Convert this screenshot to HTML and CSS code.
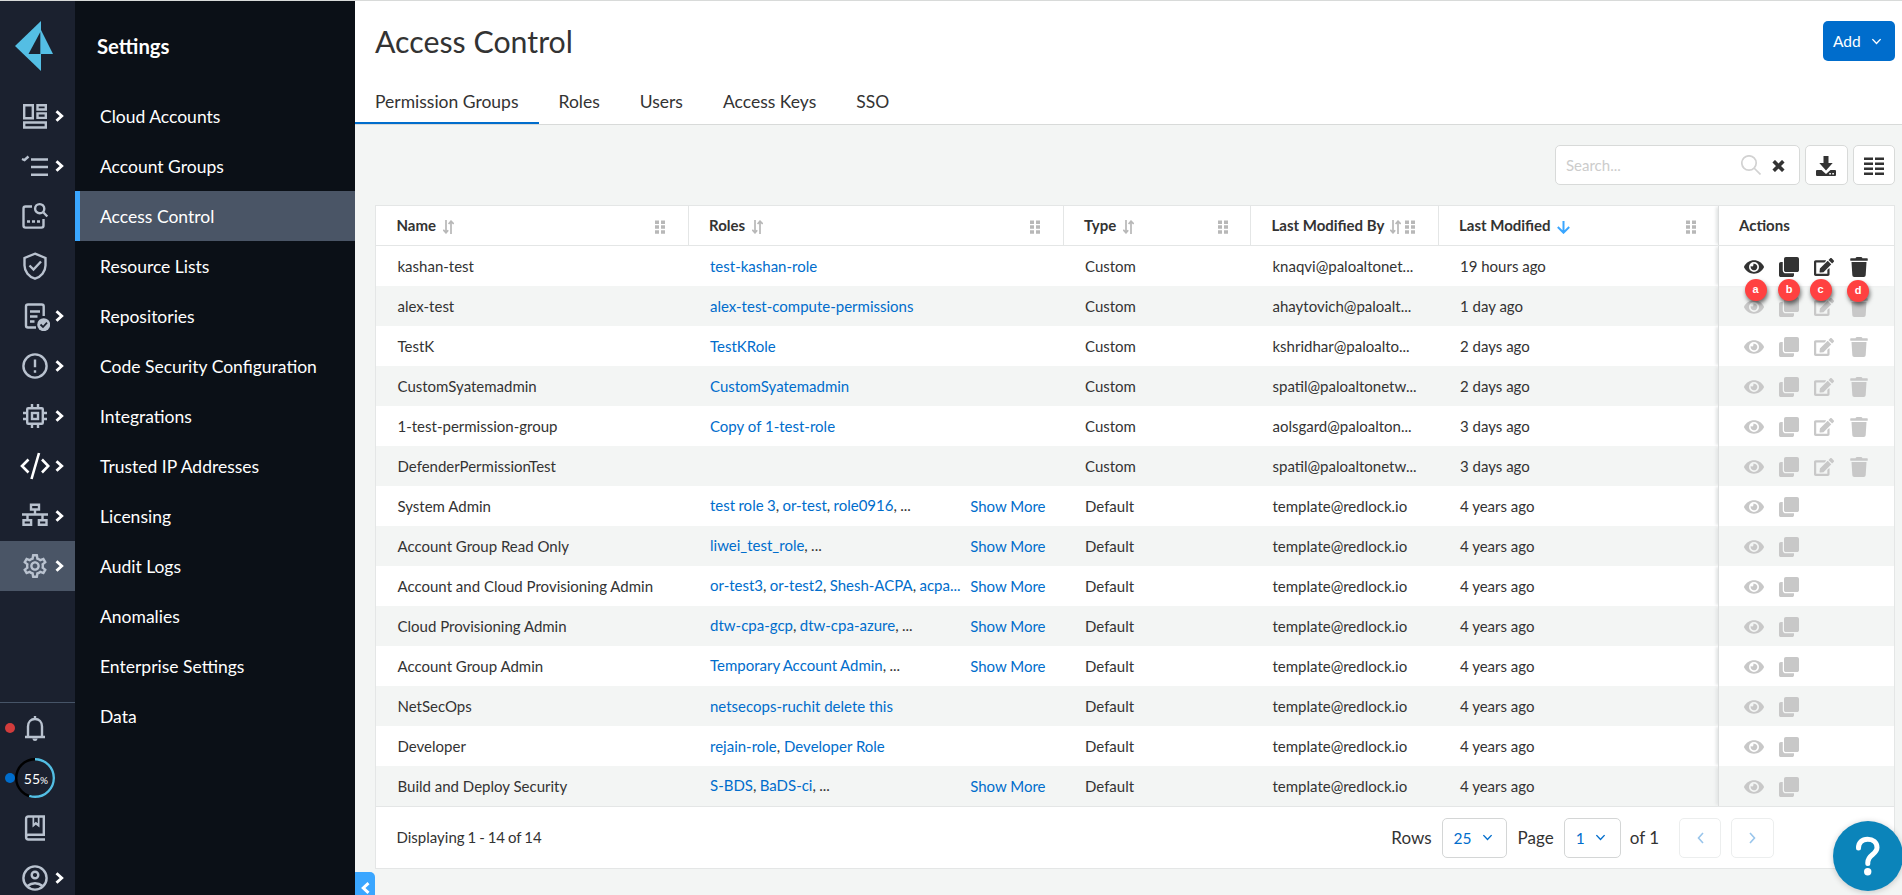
FILE: index.html
```html
<!DOCTYPE html>
<html lang="en">
<head>
<meta charset="utf-8">
<title>Access Control</title>
<link rel="stylesheet" href="styles.css">
</head>
<body>
<svg class="defs" width="0" height="0" aria-hidden="true">
  <symbol id="eye" viewBox="0 0 576 512"><path d="M572.52 241.4C518.29 135.59 410.93 64 288 64S57.68 135.64 3.48 241.41a32.35 32.35 0 0 0 0 29.19C57.71 376.41 165.07 448 288 448s230.32-71.64 284.52-177.41a32.35 32.35 0 0 0 0-29.19zM288 400a144 144 0 1 1 144-144 143.93 143.93 0 0 1-144 144zm0-240a95.31 95.31 0 0 0-25.31 3.79 47.85 47.85 0 0 1-66.9 66.9A95.78 95.78 0 1 0 288 160z"/></symbol>
  <symbol id="clone" viewBox="0 0 512 512"><path d="M464 0c26.51 0 48 21.49 48 48v288c0 26.51-21.49 48-48 48H176c-26.51 0-48-21.49-48-48V48c0-26.51 21.49-48 48-48h288M176 416c-44.112 0-80-35.888-80-80V128H48c-26.51 0-48 21.49-48 48v288c0 26.51 21.49 48 48 48h288c26.51 0 48-21.49 48-48v-48H176z"/></symbol>
  <symbol id="edit" viewBox="0 0 576 512"><path d="M402.6 83.2l90.2 90.2c3.8 3.8 3.8 10 0 13.8L274.4 405.6l-92.8 10.3c-12.4 1.4-22.9-9.1-21.5-21.5l10.3-92.8L388.8 83.2c3.8-3.8 10-3.8 13.8 0zm162-22.9l-48.8-48.8c-15.2-15.2-39.9-15.2-55.2 0l-35.4 35.4c-3.8 3.8-3.8 10 0 13.8l90.2 90.2c3.8 3.8 10 3.8 13.8 0l35.4-35.4c15.2-15.3 15.2-40 0-55.2zM384 346.2V448H64V128h229.8c3.2 0 6.2-1.3 8.5-3.5l40-40c7.6-7.6 2.2-20.5-8.5-20.5H48C21.5 64 0 85.5 0 112v352c0 26.5 21.5 48 48 48h352c26.5 0 48-21.5 48-48V306.2c0-10.7-12.9-16-20.5-8.5l-40 40c-2.2 2.3-3.5 5.3-3.5 8.5z"/></symbol>
  <symbol id="trash" viewBox="0 0 448 512"><path d="M432 32H312l-9.4-18.7A24 24 0 0 0 281.1 0H166.8a23.72 23.72 0 0 0-21.4 13.3L136 32H16A16 16 0 0 0 0 48v32a16 16 0 0 0 16 16h416a16 16 0 0 0 16-16V48a16 16 0 0 0-16-16zM53.2 467a48 48 0 0 0 47.9 45h245.8a48 48 0 0 0 47.9-45L416 128H32z"/></symbol>
  <symbol id="sort" viewBox="0 0 11 14"><path d="M3 0v12M.3 9.8 3 12.8l2.2-2.5M8 14V2M5.600 4 8 1.200 10.700 4" fill="none" stroke="currentColor" stroke-width="1.7"/></symbol>
  <symbol id="grip" viewBox="0 0 10 14"><path d="M0 .5h4v3.500H0zM6 .5h4v3.500H6zM0 5.300h4v3.500H0zM6 5.300h4v3.500H6zM0 10.200h4v3.500H0zM6 10.200h4v3.500H6z"/></symbol>
  <symbol id="chev" viewBox="0 0 9 12"><path d="M1.500 1.200 6.700 6 1.500 10.800" fill="none" stroke="currentColor" stroke-width="2.9"/></symbol>
  <symbol id="down" viewBox="0 0 12 8"><path d="M1.300 1.300 6 6.200l4.700-4.900" fill="none" stroke="currentColor" stroke-width="1.6"/></symbol>
</svg>

<div class="app">
  <nav class="rail">
    <svg class="logo" viewBox="0 0 38 50"><path d="M26 0v50L0 25z"/><path d="M26 9 38 33H26z"/><path class="hole" d="M25.300 11v22H13.500z"/></svg>
    <div class="rail-nav">
      <div class="rail-item"><svg class="ri" viewBox="-15 -15 30 30"><path d="M-10.800-10.800H-2.200V2.200h-8.600zM2.500-10.800h8.300v4.300H2.500zM2.500-2.600h8.300v4.500H2.500zM-10.800 6.500h21.600v5H-10.800z"/></svg><svg class="chev"><use href="#chev"/></svg></div>
      <div class="rail-item"><svg class="ri" viewBox="-15 -15 30 30"><path d="M-4-6.500h17M-4 1h17M-4 8.700h17M-13-7l2.500 1 4-3.500"/></svg><svg class="chev"><use href="#chev"/></svg></div>
      <div class="rail-item"><svg class="ri" viewBox="-15 -15 30 30"><path d="M-3-9.500h-6.500q-2 0-2 2V9.600q0 2 2 2H6.500q2 0 2-2V3M8.500-3.500l3.800 4"/><circle cx="4.700" cy="-7.300" r="4.600"/><path d="M-8 5.500h3M-3 5.500H0M2 5.500h3"/></svg></div>
      <div class="rail-item"><svg class="ri" viewBox="-15 -15 30 30"><path d="M0-12.300 10.500-8v7.500C10.500 5.500 6 10.800 0 12.700-6 10.800-10.500 5.500-10.500-.5V-8zM-5.500-.5l4 4L6-4.500"/></svg></div>
      <div class="rail-item"><svg class="ri" viewBox="-15 -15 30 30"><path d="M1 11.500h-8q-2 0-2-2V-9.500q0-2 2-2H6.700q2 0 2 2V0M-5-4.500H5M-5 .5H2.500M-5 5.500H-.5"/><circle class="solid" cx="8.700" cy="8.700" r="6.500"/><path class="cut" d="M5.500 8.500 8 11l4-4.300"/></svg><svg class="chev"><use href="#chev"/></svg></div>
      <div class="rail-item"><svg class="ri" viewBox="-15 -15 30 30"><circle r="11.600"/><path d="M0-6.500v7.800M0 4.200v2.600"/></svg><svg class="chev"><use href="#chev"/></svg></div>
      <div class="rail-item"><svg class="ri" viewBox="-15 -15 30 30"><rect x="-7.800" y="-7.800" width="15.600" height="15.600" rx="1"/><rect x="-3" y="-3" width="6" height="6"/><path d="M-3-8v-4M3-8v-4M-3 8v4M3 8v4M-8-3h-4M-8 3h-4M8-3h4M8 3h4"/></svg><svg class="chev"><use href="#chev"/></svg></div>
      <div class="rail-item"><svg class="ri code" viewBox="-15 -15 30 30"><path d="M-6.500-6.500-13 0l6.500 6.500M7-6.500 13.300 0 7 6.500M4-13-3.500 13"/></svg><svg class="chev"><use href="#chev"/></svg></div>
      <div class="rail-item"><svg class="ri" viewBox="-15 -15 30 30"><path d="M-4-11.300h8v4.800h-8zM0-6v5M-13-1.500h26M-7.500-1v5M7.500-1v5M-11.500 4.200h7.600v4.600h-7.600zM3.900 4.200h7.600v4.600H3.900z"/></svg><svg class="chev"><use href="#chev"/></svg></div>
      <div class="rail-item active"><svg class="ri gear" viewBox="-.5 -.5 25 25"><path d="M19.430 12.980c.04-.32.07-.64.07-.98 0-.34-.03-.66-.07-.98l2.110-1.650c.19-.15.24-.42.12-.64l-2-3.460c-.09-.16-.26-.25-.44-.25-.06 0-.12.010-.17.030l-2.490 1c-.52-.4-1.080-.73-1.690-.98l-.38-2.650C14.460 2.180 14.250 2 14 2h-4c-.25 0-.46.18-.49.42l-.38 2.650c-.61.25-1.170.59-1.690.98l-2.490-1c-.06-.02-.12-.03-.18-.03-.17 0-.34.09-.43.25l-2 3.460c-.13.22-.07.49.12.64l2.110 1.650c-.04.32-.07.65-.07.98 0 .33.03.66.07.98l-2.110 1.650c-.19.15-.24.42-.12.64l2 3.460c.09.16.26.25.44.25.06 0 .12-.01.17-.03l2.490-1c.52.4 1.080.73 1.690.98l.38 2.650c.03.24.24.42.49.42h4c.25 0 .46-.18.49-.42l.38-2.650c.61-.25 1.170-.59 1.690-.98l2.490 1c.06.02.12.03.18.03.17 0 .34-.09.43-.25l2-3.460c.12-.22.07-.49-.12-.64l-2.110-1.650zm-1.980-1.710c.04.31.05.52.05.73 0 .21-.02.43-.05.73l-.14 1.130.89.7 1.080.84-.7 1.210-1.270-.51-1.040-.42-.9.68c-.43.32-.84.56-1.250.73l-1.060.43-.16 1.130-.2 1.350h-1.400l-.19-1.350-.16-1.130-1.060-.43c-.43-.18-.83-.41-1.230-.71l-.91-.7-1.060.43-1.270.51-.7-1.210 1.080-.84.89-.7-.14-1.130c-.03-.31-.05-.54-.05-.74s.02-.43.05-.73l.14-1.130-.89-.7-1.080-.84.7-1.210 1.270.51 1.040.42.9-.68c.43-.32.84-.56 1.250-.73l1.060-.43.16-1.130.2-1.350h1.390l.19 1.350.16 1.130 1.060.43c.43.18.83.41 1.230.71l.91.7 1.060-.43 1.270-.51.7 1.210-1.070.85-.89.7.14 1.130zM12 8c-2.210 0-4 1.790-4 4s1.790 4 4 4 4-1.790 4-4-1.790-4-4-4zm0 6c-1.100 0-2-.9-2-2s.9-2 2-2 2 .9 2 2-.9 2-2 2z"/></svg><svg class="chev"><use href="#chev"/></svg></div>
    </div>
    <div class="rail-foot">
      <div class="rail-item"><span class="dot red"></span><svg class="ri" viewBox="-15 -15 30 30"><path d="M-10 9h20M-7 9V-1.500C-7-6-4-9 0-9s7 3 7 7.500V9M0-9v-3"/><path class="solid" d="M-2.700 10.500h5.400q-.5 2.500-2.700 2.500t-2.700-2.500z"/></svg></div>
      <div class="rail-item ring-item"><span class="dot blue"></span><svg class="ring" viewBox="-20 -20 40 40"><circle class="track" r="18.800"/><circle class="bar" r="18.800" pathLength="100" stroke-dasharray="55 45" transform="rotate(-90)"/></svg><span class="pct">55<small>%</small></span></div>
      <div class="rail-item"><svg class="ri" viewBox="-15 -15 30 30"><path d="M10 11.500H-6.700q-2.200 0-2.200-2.200V-9.300q0-2.200 2.200-2.200H8.800V6.700H-6.500q-2.400 0-2.400 2.400"/><path class="solid" d="M-2.500-11.500v11L.8-3.200 4.500-.5v-11H2.800v6.800L.8-6.200-.8-4.700v-6.800z"/></svg></div>
      <div class="rail-item"><svg class="ri" viewBox="-15 -15 30 30"><circle r="11.600"/><circle cy="-3" r="3.300"/><path d="M-8 8.300Q0 2 8 8.300"/></svg><svg class="chev"><use href="#chev"/></svg></div>
    </div>
  </nav>

  <aside class="side">
    <h2>Settings</h2>
    <ul>
      <li>Cloud Accounts</li><li>Account Groups</li><li class="active">Access Control</li><li>Resource Lists</li><li>Repositories</li><li>Code Security Configuration</li><li>Integrations</li><li>Trusted IP Addresses</li><li>Licensing</li><li>Audit Logs</li><li>Anomalies</li><li>Enterprise Settings</li><li>Data</li>
    </ul>
  </aside>

  <main class="main">
    <header class="head">
      <div class="title-row"><h1>Access Control</h1><button class="add"><span>Add</span><svg><use href="#down"/></svg></button></div>
      <div class="tabs"><span class="tab on">Permission Groups</span><span class="tab">Roles</span><span class="tab">Users</span><span class="tab">Access Keys</span><span class="tab">SSO</span></div>
    </header>
    <div class="tools">
      <div class="search"><span>Search...</span>
        <svg class="mag" viewBox="0 0 20 20"><circle cx="8" cy="8" r="7.200"/><path d="M13 13l6.500 6.500"/></svg>
        <svg class="x" viewBox="0 0 13 12"><path d="M1.700 1.200l9.600 9.600M11.300 1.200 1.700 10.800"/></svg>
      </div>
      <div class="tool dl"><svg viewBox="0 0 20 20"><path d="M7.500 0h5v7h4.200L10 14.500 3.300 7h4.200z"/><path d="M1 14h4.500L10 18l4.500-4H19q1 0 1 1v4q0 1-1 1H1q-1 0-1-1v-4q0-1 1-1z"/><path class="w" d="M13.300 17h1.600v1.500h-1.600zM16.300 17h1.600v1.500h-1.600z"/></svg></div>
      <div class="tool"><svg viewBox="0 0 20 20"><path d="M0 1.500h9v2.500H0zM11 1.500h9v2.500h-9zM0 6.500h9V9H0zM11 6.500h9V9h-9zM0 11.500h9V14H0zM11 11.500h9V14h-9zM0 16.500h9V19H0zM11 16.500h9V19h-9z"/></svg></div>
    </div>

    <section class="grid">
      <div class="row hrow">
        <div class="c"><b>Name</b><svg class="sort"><use href="#sort"/></svg><svg class="grip"><use href="#grip"/></svg></div>
        <div class="c"><b>Roles</b><svg class="sort"><use href="#sort"/></svg><svg class="grip"><use href="#grip"/></svg></div>
        <div class="c"><b>Type</b><svg class="sort"><use href="#sort"/></svg><svg class="grip"><use href="#grip"/></svg></div>
        <div class="c"><b>Last Modified By</b><svg class="sort tight"><use href="#sort"/></svg><svg class="grip"><use href="#grip"/></svg></div>
        <div class="c"><b>Last Modified</b><svg class="desc" viewBox="0 0 13 13"><path d="M6.500 0v11.500M.8 6l5.700 5.700L12.200 6"/></svg><svg class="grip"><use href="#grip"/></svg></div>
        <div class="c act"><b>Actions</b></div>
      </div>
      <div class="row first"><div class="c">kashan-test</div><div class="c"><a>test-kashan-role</a></div><div class="c">Custom</div><div class="c">knaqvi@paloaltonet...</div><div class="c">19 hours ago</div><div class="c act"><svg><use href="#eye"/></svg><svg><use href="#clone"/></svg><svg><use href="#edit"/></svg><svg><use href="#trash"/></svg><i class="mark a">a</i><i class="mark b">b</i><i class="mark m3">c</i><i class="mark d">d</i></div></div>
      <div class="row"><div class="c">alex-test</div><div class="c"><a>alex-test-compute-permissions</a></div><div class="c">Custom</div><div class="c">ahaytovich@paloalt...</div><div class="c">1 day ago</div><div class="c act"><svg><use href="#eye"/></svg><svg><use href="#clone"/></svg><svg><use href="#edit"/></svg><svg><use href="#trash"/></svg></div></div>
      <div class="row"><div class="c">TestK</div><div class="c"><a>TestKRole</a></div><div class="c">Custom</div><div class="c">kshridhar@paloalto...</div><div class="c">2 days ago</div><div class="c act"><svg><use href="#eye"/></svg><svg><use href="#clone"/></svg><svg><use href="#edit"/></svg><svg><use href="#trash"/></svg></div></div>
      <div class="row"><div class="c">CustomSyatemadmin</div><div class="c"><a>CustomSyatemadmin</a></div><div class="c">Custom</div><div class="c">spatil@paloaltonetw...</div><div class="c">2 days ago</div><div class="c act"><svg><use href="#eye"/></svg><svg><use href="#clone"/></svg><svg><use href="#edit"/></svg><svg><use href="#trash"/></svg></div></div>
      <div class="row"><div class="c">1-test-permission-group</div><div class="c"><a>Copy of 1-test-role</a></div><div class="c">Custom</div><div class="c">aolsgard@paloalton...</div><div class="c">3 days ago</div><div class="c act"><svg><use href="#eye"/></svg><svg><use href="#clone"/></svg><svg><use href="#edit"/></svg><svg><use href="#trash"/></svg></div></div>
      <div class="row"><div class="c">DefenderPermissionTest</div><div class="c"></div><div class="c">Custom</div><div class="c">spatil@paloaltonetw...</div><div class="c">3 days ago</div><div class="c act"><svg><use href="#eye"/></svg><svg><use href="#clone"/></svg><svg><use href="#edit"/></svg><svg><use href="#trash"/></svg></div></div>
      <div class="row"><div class="c">System Admin</div><div class="c multi"><span><a>test role 3</a>, <a>or-test</a>, <a>role0916</a>, ...</span><a class="more">Show More</a></div><div class="c">Default</div><div class="c">template@redlock.io</div><div class="c">4 years ago</div><div class="c act"><svg><use href="#eye"/></svg><svg><use href="#clone"/></svg></div></div>
      <div class="row"><div class="c">Account Group Read Only</div><div class="c multi"><span><a>liwei_test_role</a>, ...</span><a class="more">Show More</a></div><div class="c">Default</div><div class="c">template@redlock.io</div><div class="c">4 years ago</div><div class="c act"><svg><use href="#eye"/></svg><svg><use href="#clone"/></svg></div></div>
      <div class="row"><div class="c">Account and Cloud Provisioning Admin</div><div class="c multi"><span><a>or-test3</a>, <a>or-test2</a>, <a>Shesh-ACPA</a>, <a>acpa...</a></span><a class="more">Show More</a></div><div class="c">Default</div><div class="c">template@redlock.io</div><div class="c">4 years ago</div><div class="c act"><svg><use href="#eye"/></svg><svg><use href="#clone"/></svg></div></div>
      <div class="row"><div class="c">Cloud Provisioning Admin</div><div class="c multi"><span><a>dtw-cpa-gcp</a>, <a>dtw-cpa-azure</a>, ...</span><a class="more">Show More</a></div><div class="c">Default</div><div class="c">template@redlock.io</div><div class="c">4 years ago</div><div class="c act"><svg><use href="#eye"/></svg><svg><use href="#clone"/></svg></div></div>
      <div class="row"><div class="c">Account Group Admin</div><div class="c multi"><span><a>Temporary Account Admin</a>, ...</span><a class="more">Show More</a></div><div class="c">Default</div><div class="c">template@redlock.io</div><div class="c">4 years ago</div><div class="c act"><svg><use href="#eye"/></svg><svg><use href="#clone"/></svg></div></div>
      <div class="row"><div class="c">NetSecOps</div><div class="c"><a>netsecops-ruchit delete this</a></div><div class="c">Default</div><div class="c">template@redlock.io</div><div class="c">4 years ago</div><div class="c act"><svg><use href="#eye"/></svg><svg><use href="#clone"/></svg></div></div>
      <div class="row"><div class="c">Developer</div><div class="c"><span><a>rejain-role</a>, <a>Developer Role</a></span></div><div class="c">Default</div><div class="c">template@redlock.io</div><div class="c">4 years ago</div><div class="c act"><svg><use href="#eye"/></svg><svg><use href="#clone"/></svg></div></div>
      <div class="row"><div class="c">Build and Deploy Security</div><div class="c multi"><span><a>S-BDS</a>, <a>BaDS-ci</a>, ...</span><a class="more">Show More</a></div><div class="c">Default</div><div class="c">template@redlock.io</div><div class="c">4 years ago</div><div class="c act"><svg><use href="#eye"/></svg><svg><use href="#clone"/></svg></div></div>
      <footer class="foot">
        <span class="count">Displaying 1 - 14 of 14</span>
        <div class="pager">
          <span class="rows-l">Rows</span><div class="sel s1"><span>25</span><svg><use href="#down"/></svg></div>
          <span class="page-l">Page</span><div class="sel s2"><span>1</span><svg><use href="#down"/></svg></div>
          <span class="of">of 1</span>
          <div class="pg p1"><svg viewBox="0 0 7 12"><path d="M6 1 1.500 6 6 11"/></svg></div><div class="pg p2"><svg viewBox="0 0 7 12"><path d="M1 1l4.500 5L1 11"/></svg></div>
        </div>
      </footer>
    </section>
    <div class="collapse"><svg viewBox="0 0 9 12"><path d="M7.500 1.200 2.300 6l5.200 4.800"/></svg></div>
    <div class="help"><svg viewBox="0 0 26 40"><path d="M3.500 12C3.500 6.500 7 3.300 12.500 3.300S22 6.500 22 11.500c0 7-9.200 7-9.200 15v1"/><circle cx="12.700" cy="35.800" r="3.700"/></svg></div>
  </main>
</div>
</body>
</html>
```
FILE: styles.css
```css
* { box-sizing: border-box; }
body { margin: 0; font-family: Lato, "Open Sans", sans-serif; color: #333; overflow: hidden; }
svg { display: block; flex: none; fill: currentColor; }
.defs { position: absolute; }
.app { display: flex; height: 895px; border-top: 1px solid #d8dad9; overflow: hidden; }

/* icon rail */
.rail { width: 75px; flex: none; background: #1b212f; color: #b9c2cf; display: flex; flex-direction: column; height: 902px; }
.logo { width: 38px; height: 50px; margin: 20px 0 20px 15px; fill: #54bee4; }
.logo .hole { fill: #1b212f; }
.rail-nav { flex: 1; }
.rail-foot { border-top: 1px solid #465467; height: 201px; }
.rail-item { height: 50px; display: flex; align-items: center; padding-left: 20px; position: relative; }
.rail-item.active { background: #4a5566; }
.ri { width: 30px; height: 30px; fill: none; stroke: currentColor; stroke-width: 2.4; }
.ri.gear { fill: currentColor; stroke: none; }
.ri.code { color: #fff; stroke-width: 2.6; }
.ri .solid { fill: currentColor; stroke: none; }
.ri .cut { stroke: #1b212f; stroke-width: 1.8; }
.chev { width: 9px; height: 12px; margin-left: 5px; color: #fff; }
.dot { position: absolute; left: 5px; top: 20px; width: 10px; height: 10px; border-radius: 50%; }
.red { background: #d23c3c; }
.blue { background: #006dcc; }
.ring-item { padding-left: 15px; }
.ring { width: 40px; height: 40px; fill: none; stroke-width: 2.4; }
.ring .track { stroke: #000; }
.ring .bar { stroke: #54bee4; }
.pct { position: absolute; left: 15px; width: 42px; text-align: center; color: #fff; font-size: 14px; }
.pct small { font-size: 10px; }

/* settings menu */
.side { width: 280px; flex: none; background: #0b1017; color: #fff; }
.side h2 { margin: 0; height: 90px; padding: 32px 0 0 22px; font-size: 20.3px; line-height: 26px; font-weight: 700; }
.side ul { margin: 0; padding: 0; list-style: none; }
.side li { height: 50px; line-height: 51px; padding-left: 20px; border-left: 5px solid transparent; font-size: 17.5px; }
.side li.active { background: #4a5566; border-color: #3aa6ff; }

/* page */
.main { flex: 1; background: #f3f5f4; position: relative; }
.head { background: #fff; height: 124px; border-bottom: 1px solid #d8dad9; display: flex; flex-direction: column; justify-content: space-between; }
.title-row { display: flex; justify-content: space-between; padding: 20px 7px 0 20px; }
h1 { margin: 0; font-size: 30.3px; line-height: 40px; font-weight: 400; }
.add { width: 72px; height: 40px; border: 0; border-radius: 5px; background: #006dcc; color: #fff; font: 400 15.5px Lato, sans-serif; display: flex; align-items: center; padding: 0 0 1px 10px; gap: 10px; }
.add svg { width: 11px; height: 7px; margin-top: 2px; }
.tabs { display: flex; }
.tab { padding: 0 20px; height: 44px; line-height: 44px; font-size: 17.5px; border-bottom: 2px solid transparent; }
.tab.on { border-color: #006dcc; }

.tools { display: flex; justify-content: flex-end; gap: 5px; padding: 20px 7px 0 0; height: 80px; }
.search, .tool { height: 40px; background: #fff; border: 1px solid #d8dad9; border-radius: 5px; display: flex; align-items: center; }
.search { width: 245px; padding-left: 10px; color: #ccc; font-size: 15px; }
.mag { width: 20px; height: 20px; fill: none; stroke: #d2d2d2; stroke-width: 1.7; margin-left: auto; }
.x { width: 13px; height: 12px; stroke: #333; stroke-width: 3.6; margin: 2px 14px 0 11px; }
.tool { width: 42px; justify-content: center; }
.tool.dl { width: 43px; }
.tool.dl svg { margin: 2px 1px 0 0; }
.tool svg { width: 20px; height: 20px; margin-top: 1px; }
.tool .w { fill: #fff; }

.grid { margin: 0 7px 0 20px; border: 1px solid #e4e6e6; background: #fff; }
.row { display: grid; grid-template-columns: 312.5px 375px 187.5px 187.5px 279.5px 1fr; height: 40px; font-size: 15px; }
.row:nth-child(odd) { background: #f3f5f4; }
.row .c { display: flex; align-items: center; padding-left: 21.5px; white-space: nowrap; min-width: 0; position: relative; }
.row a { color: #006dcc; }
.row.hrow { background: #fff; border-bottom: 1px solid #e4e6e6; }
.hrow .c { padding-left: 20.5px; padding-right: 22.5px; border-right: 1px solid #e4e6e6; }
.hrow .c.act, .hrow .c:nth-child(5) { border-right: 0; }
.hrow b { font-weight: 700; padding-bottom: 2px; }
.sort { width: 11px; height: 14px; margin: 3px 0 0 7px; color: #b8b8b8; }
.sort.tight { margin-left: 6px; }
.grip { width: 10px; height: 14px; margin: 3px 0 0 auto; color: #b8b8b8; }
.desc { width: 13px; height: 13px; margin: 3px 0 0 6px; fill: none; stroke: #3aa6ff; stroke-width: 2; }
.row .act { border-left: 1px solid #dcdede; color: #c8c8c8; padding-left: 25px; box-shadow: -3px 0 3px -1px #e3e5e5; clip-path: inset(0 0 0 -6px); }
.first .act { color: #333; clip-path: none; z-index: 2; }
.hrow .act { padding-left: 20px; color: #333; }
.act svg { width: 20px; height: 20px; margin: 1px 15px 0 0; }
.multi > span { position: relative; top: -1px; word-spacing: -.5px; }
.multi .more { margin-left: auto; padding-right: 18px; }
.mark { position: absolute; top: 33px; width: 22px; height: 22px; border-radius: 50%; background: #ff4141; color: #fff; font: 700 11px/21px "Liberation Sans", sans-serif; text-align: center; box-shadow: 1px 3px 4px rgba(0,0,0,.55); }
.mark.a { left: 25.5px; }
.mark.b { left: 59px; }
.mark.m3 { left: 90.5px; }
.mark.d { left: 128px; top: 34px; }

.foot { border-top: 1px solid #e4e6e6; height: 62px; display: flex; justify-content: space-between; align-items: center; padding-left: 20.5px; font-size: 15px; }
.count { word-spacing: -.9px; padding-bottom: 1px; }
.pager { display: flex; align-items: center; font-size: 17px; padding-right: 120px; }
.sel, .pg { height: 40px; border: 1px solid #d4d6d6; border-radius: 5px; display: flex; align-items: center; }
.sel { color: #006dcc; font-size: 15.5px; padding-left: 11px; gap: 10px; }
.sel svg { width: 11px; height: 7px; }
.s1 { width: 65px; margin: 0 11px 0 10px; }
.s2 { width: 57px; margin: 0 9px 0 10px; }
.pg { border-color: #eceeee; justify-content: center; }
.pg svg { width: 7px; height: 12px; fill: none; stroke: #99c5eb; stroke-width: 1.6; }
.p1 { width: 42px; margin: 0 10px 0 20px; }
.p2 { width: 43px; }

.collapse { position: absolute; left: 0; bottom: 0; width: 20px; height: 23px; background: #3aa6ff; border-radius: 0 5px 0 0; padding: 10px 0 0 6px; }
.collapse svg { width: 9px; height: 12px; fill: none; stroke: #fff; stroke-width: 3; }
.help { position: absolute; right: -1px; bottom: 4px; width: 70px; height: 70px; border-radius: 50%; background: #0b84ba; color: #fff; display: flex; align-items: center; justify-content: center; box-shadow: 0 1px 6px rgba(0,0,0,.2); }
.help svg { width: 26px; height: 40px; }
.help path { fill: none; stroke: #fff; stroke-width: 5; stroke-linecap: round; }
```
